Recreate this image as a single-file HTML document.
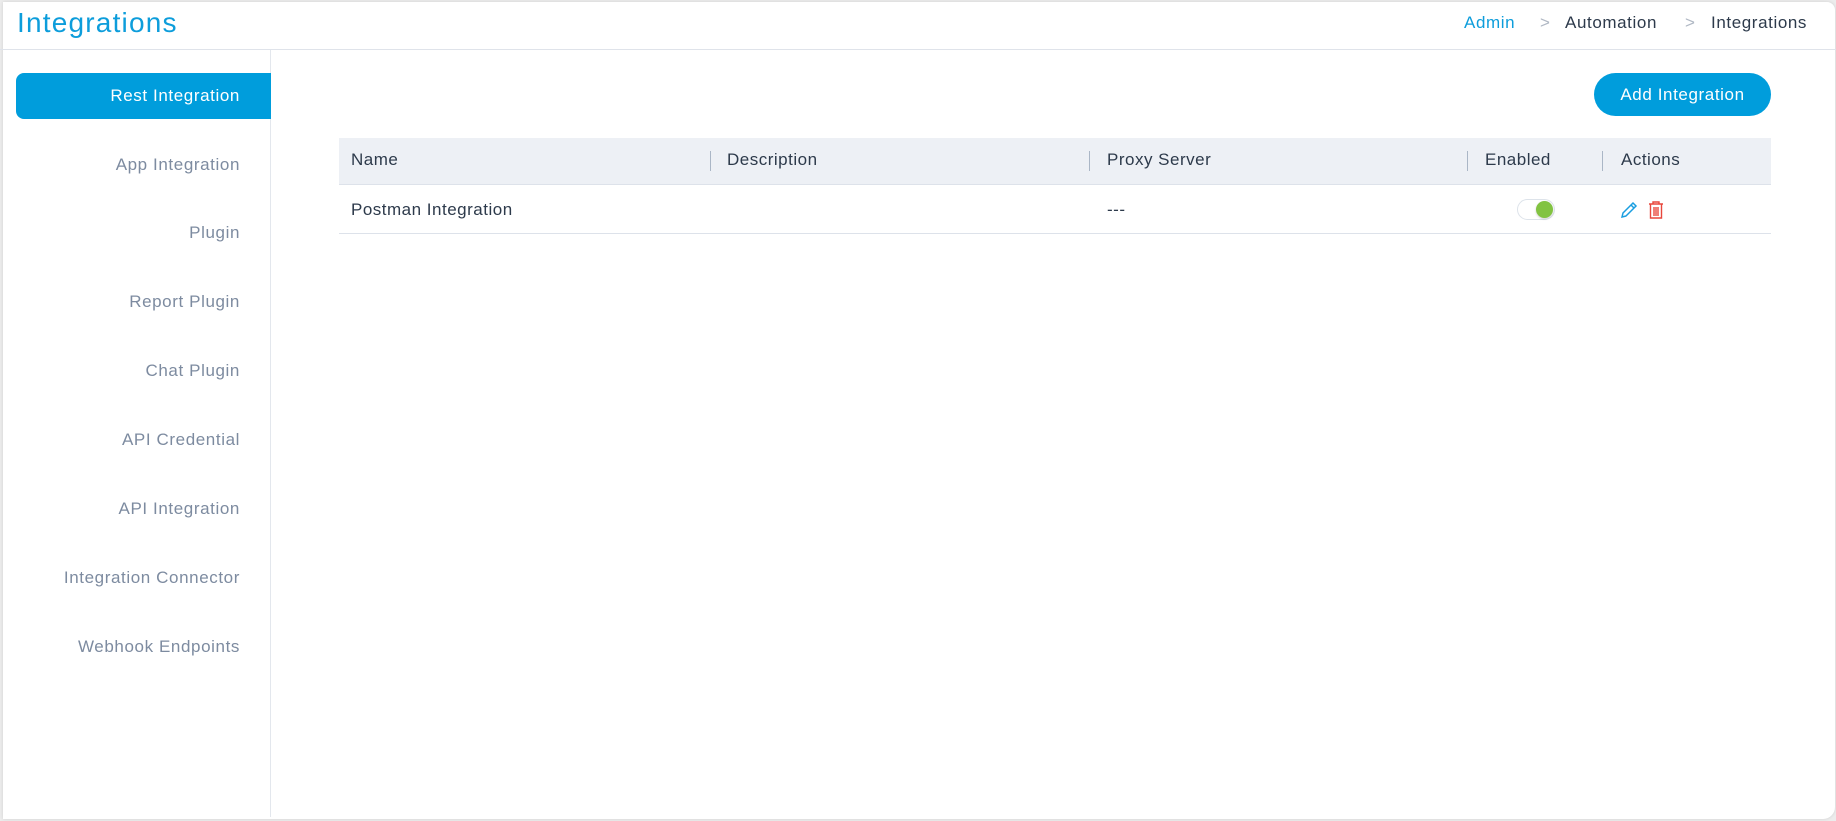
<!DOCTYPE html>
<html><head><meta charset="utf-8"><style>
*{margin:0;padding:0;box-sizing:border-box}
html,body{width:1836px;height:821px;overflow:hidden;background:#ececec;font-family:"Liberation Sans",sans-serif}
.card{position:absolute;left:3px;top:2px;width:1832px;height:817px;background:#fff;border-radius:0 8px 12px 0;box-shadow:0 0 3px rgba(0,0,0,.12)}
.t{position:absolute;white-space:nowrap}
.title{left:17px;top:7px;font-size:28px;color:#0d9ddb;letter-spacing:1.2px}
.hl{position:absolute;left:0;top:49px;width:1836px;height:1px;background:#dfe3ea}
.bc{top:13px;font-size:17px;color:#2d3a4b;letter-spacing:.6px}
.chev{top:13px;font-size:17px;color:#b0b8c4}
.side{position:absolute;left:270px;top:50px;width:1px;height:767px;background:#e3e7ed}
.act{position:absolute;left:16px;top:73px;width:255px;height:46px;background:#009ddc;border-radius:8px 0 0 8px}
.si{right:1596px;font-size:17px;color:#7d8ba0;letter-spacing:.6px}
.btn{position:absolute;left:1594px;top:73px;width:177px;height:43px;background:#009ddc;border-radius:22px;color:#fff;font-size:17px;text-align:center;line-height:43px;letter-spacing:.6px}
.th{position:absolute;left:339px;top:138px;width:1432px;height:47px;background:#edf0f5;border-bottom:1px solid #dde2ea}
.rb{position:absolute;left:339px;top:233px;width:1432px;height:1px;background:#dde2ea}
.sep{position:absolute;top:151px;width:1px;height:20px;background:#aab6c6}
.h{top:150px;font-size:17px;color:#2d3a4b;letter-spacing:.5px}
.c{top:200px;font-size:17px;color:#2d3a4b;letter-spacing:.5px}
.tg{position:absolute;left:1517px;top:199px;width:38px;height:21px;border:1px solid #dde3ea;border-radius:11px;background:#fff}
.tg i{position:absolute;right:1px;top:1px;width:17px;height:17px;border-radius:50%;background:#82c341;box-shadow:0 1px 2px rgba(0,0,0,.2)}
</style></head><body>
<div class="card"></div>
<div class="t title">Integrations</div>
<div class="hl"></div>
<div class="t bc" style="left:1464px;color:#0d9ddb">Admin</div>
<div class="t chev" style="left:1540px">&gt;</div>
<div class="t bc" style="left:1565px">Automation</div>
<div class="t chev" style="left:1685px">&gt;</div>
<div class="t bc" style="left:1711px">Integrations</div>
<div class="side"></div>
<div class="act"></div>
<div class="t si" style="top:86px;color:#fff">Rest Integration</div>
<div class="t si" style="top:155px">App Integration</div>
<div class="t si" style="top:223px">Plugin</div>
<div class="t si" style="top:292px">Report Plugin</div>
<div class="t si" style="top:361px">Chat Plugin</div>
<div class="t si" style="top:430px">API Credential</div>
<div class="t si" style="top:499px">API Integration</div>
<div class="t si" style="top:568px">Integration Connector</div>
<div class="t si" style="top:637px">Webhook Endpoints</div>
<div class="btn">Add Integration</div>
<div class="th"></div>
<div class="sep" style="left:710px"></div>
<div class="sep" style="left:1089px"></div>
<div class="sep" style="left:1467px"></div>
<div class="sep" style="left:1602px"></div>
<div class="t h" style="left:351px">Name</div>
<div class="t h" style="left:727px">Description</div>
<div class="t h" style="left:1107px">Proxy Server</div>
<div class="t h" style="left:1485px">Enabled</div>
<div class="t h" style="left:1621px">Actions</div>
<div class="t c" style="left:351px">Postman Integration</div>
<div class="t c" style="left:1107px">---</div>
<div class="tg"><i></i></div>
<svg style="position:absolute;left:1619px;top:200px" width="20" height="20" viewBox="0 0 20 20" fill="none" stroke="#1a9ee0" stroke-width="1.5"><path d="M3 17l1-4L14 3l3 3L7 16z M12 5l3 3 M3 17l4-1"/></svg>
<svg style="position:absolute;left:1647px;top:200px" width="18" height="20" viewBox="0 0 18 20" fill="none" stroke="#e8473c" stroke-width="1.4"><path d="M2 4h14 M6 4V2h6v2 M3.5 4.5V18h11V4.5 M7 7v9 M9 7v9 M11 7v9"/></svg>
<div class="rb"></div>
</body></html>
